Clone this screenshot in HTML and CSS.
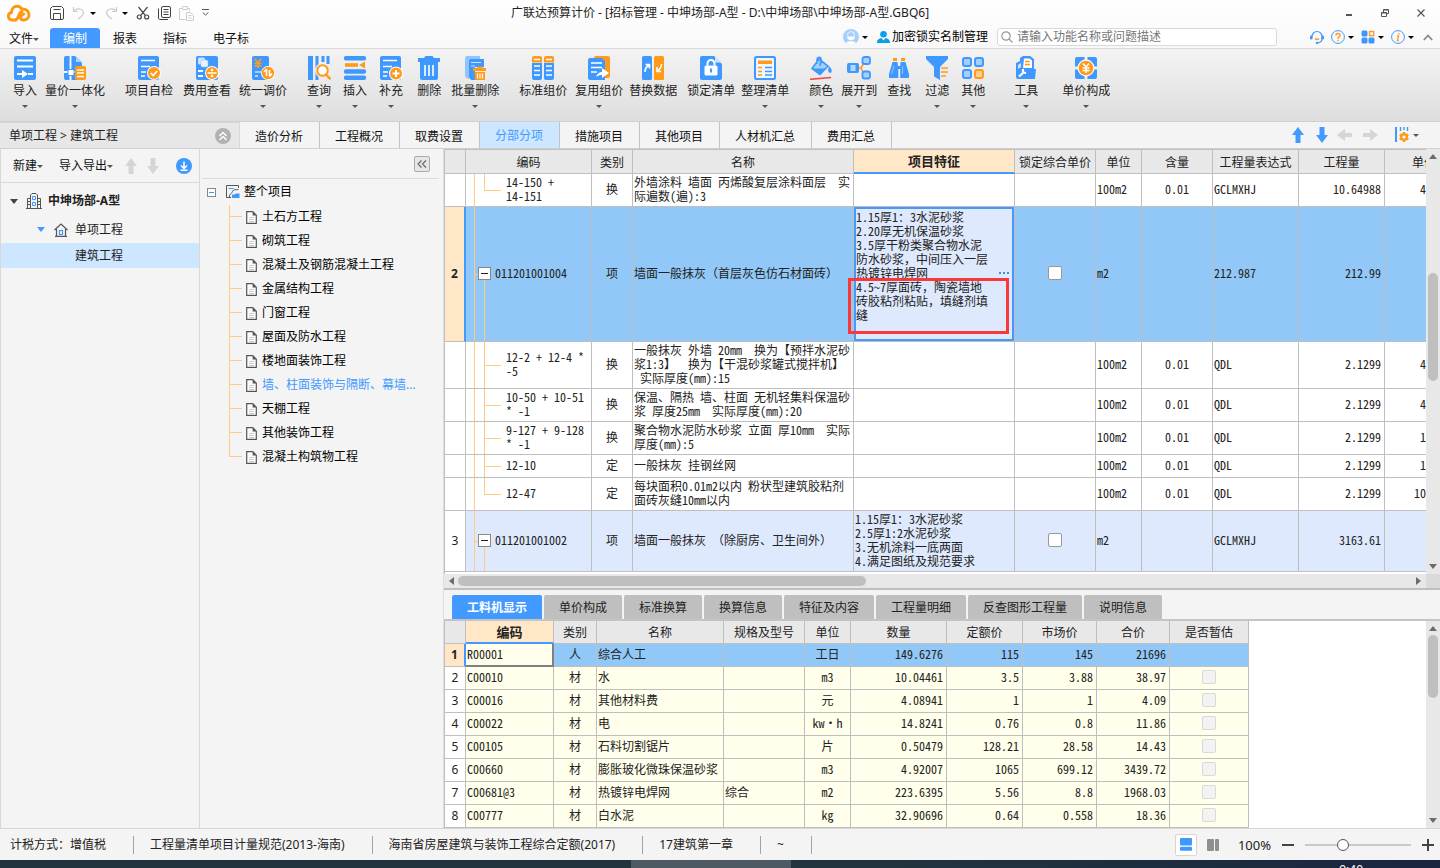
FILE: index.html
```html
<!DOCTYPE html>
<html lang="zh-CN">
<head>
<meta charset="utf-8">
<title>广联达预算计价</title>
<link rel="stylesheet" href="styles.css">
</head>
<body>
<svg class="defs" aria-hidden="true">
  <symbol id="i-doc" viewBox="0 0 11 13"><path d="M.7.7h6.1l3.500 3.500v8.100H.7z" fill="#fff" stroke="#555" stroke-width="1.200"/><path d="M6.600.5v3.900h4z" fill="#555"/><path d="M3 6.500h5M3 8.500h5M3 10.500h5" stroke="#ccc"/></symbol>
  <symbol id="i-up" viewBox="0 0 12 16"><path d="M6 0l6 8H8.500v8h-5V8H0z" fill="currentColor"/></symbol>
  <symbol id="i-down" viewBox="0 0 12 16"><path d="M6 16L0 8h3.500V0h5v8H12z" fill="currentColor"/></symbol>
  <symbol id="i-left" viewBox="0 0 16 12"><path d="M0 6l8-6v4h7v4H8v4z" fill="currentColor"/></symbol>
  <symbol id="i-right" viewBox="0 0 16 12"><path d="M16 6L8 0v4H1v4h7v4z" fill="currentColor"/></symbol>
</svg>

<header class="top">
  <div class="titlebar">
    <div class="quick">
      <svg class="logo" viewBox="0 0 24 18"><path d="M8.500 16H5a3.800 3.800 0 0 1-.6-7.500C4.600 5 7 2.300 10 2.300c2.200 0 3.800 1 4.800 2.700 3.800-.5 7.200 2 7.200 5.700 0 3-2.200 5.300-5.300 5.300-4.200 0-4.200-4 0-6" fill="none" stroke="#ff9914" stroke-width="3" stroke-linecap="round"/><path d="M8.300 16c2-.2 2.400-2 3.200-4 .8-2.200 1.600-3.800 3.500-4.200" fill="none" stroke="#ff9914" stroke-width="3" stroke-linecap="round"/></svg>
      <button class="qb save" aria-label="保存"><svg width="14" height="14" viewBox="0 0 14 14" fill="none" stroke="#444"><path d="M2.500.5h9l2 2v9.500a1.500 1.500 0 0 1-1.500 1.500H2A1.500 1.500 0 0 1 .5 12V2.500z"/><path d="M3.500 13V7.500h7V13M3.500 3.500h7"/></svg></button>
      <button class="qb" aria-label="撤销"><svg width="14" height="14" viewBox="0 0 14 14" fill="none" stroke="#ccc" stroke-width="1.200"><path d="M1.500 1v4.500H6M1.800 5.300C4 2.500 8 2 10.200 4.200S12 9 6 13"/></svg></button>
      <span class="caret black"></span>
      <button class="qb" aria-label="恢复"><svg width="14" height="14" viewBox="0 0 14 14" fill="none" stroke="#ccc" stroke-width="1.200"><path d="M12.500 1v4.500H8M12.200 5.300C10 2.500 6 2 3.800 4.200S2 9 8 13"/></svg></button>
      <span class="caret black"></span>
      <button class="qb" aria-label="剪切"><svg width="14" height="14" viewBox="0 0 14 14" fill="none" stroke="#444" stroke-width="1.200"><path d="M2.500 1l7 8.600M11.500 1l-7 8.600"/><circle cx="3.300" cy="11" r="2"/><circle cx="10.700" cy="11" r="2"/></svg></button>
      <button class="qb" aria-label="复制"><svg width="13" height="14" viewBox="0 0 13 14" fill="none" stroke="#444"><rect x="3.500" y=".5" width="9" height="11" rx="1.500"/><path d="M.5 2.500V12c0 1 .5 1.500 1.500 1.500h8M5.500 3.500h5M5.500 6h5M5.500 8.500h5"/></svg></button>
      <button class="qb" aria-label="粘贴"><svg width="15" height="15" viewBox="0 0 15 15" fill="none" stroke="#ccc"><path d="M3.500 2.500h-3v11h6M8.500 2.500h2V5M3.500.5h5v3h-5z"/><path d="M7.500 6.500h4l3 3v5h-7zM9.500 9.500h3M9.500 12h3"/></svg></button>
      <svg class="qb" width="7" height="8" viewBox="0 0 7 8" fill="none" stroke="#555"><path d="M0 .5h7M.7 3.500l2.800 2.500 2.800-2.500"/></svg>
    </div>
    <h1>广联达预算计价 - [招标管理 - 中坤场部-A型 - D:\中坤场部\中坤场部-A型.GBQ6]</h1>
    <div class="winbtns">
      <button aria-label="最小化"><svg width="10" height="10" viewBox="0 0 10 10"><path d="M2 7h6" stroke="#555" stroke-width="2"/></svg></button>
      <button aria-label="还原"><svg width="10" height="10" viewBox="0 0 10 10" fill="none" stroke="#555"><path d="M1.500 4.500h5v4h-5zM1 5h5.500M3.500 4V1.500h5v4H7M3.500 2h5"/></svg></button>
      <button aria-label="关闭"><svg width="10" height="10" viewBox="0 0 10 10" stroke="#555" stroke-width="1.200"><path d="M1.500 1.500l7 7M8.500 1.500l-7 7"/></svg></button>
    </div>
  </div>
  <div class="menubar">
    <nav class="menus">
      <button class="file">文件<span class="caret"></span></button>
      <button class="on">编制</button><button>报表</button><button>指标</button><button>电子标</button>
    </nav>
    <div class="tools">
      <svg width="16" height="16" viewBox="0 0 16 16"><circle cx="8" cy="8" r="8" fill="#a6d0fb"/><path d="M4.500 6.500c0-5 7-5 7 0" fill="none" stroke="#e6f2ff" stroke-width="1.200"/><path d="M4 7.500h8c0 5-8 5-8 0z" fill="#fff"/><path d="M3 14c1-2.500 9-2.500 10 0-2.500 2.500-7.500 2.500-10 0z" fill="#fff"/></svg>
      <span class="caret black"></span>
      <svg class="person" width="13" height="12" viewBox="0 0 13 12" fill="#0c9eea"><circle cx="6.500" cy="3.300" r="3.300"/><path d="M0 12c0-3.500 2-4.500 4.500-5l2 2.500L8.500 7c2.500.5 4.500 1.500 4.500 5z"/></svg>
      <a href="#">加密锁实名制管理</a>
      <label class="search"><svg width="12" height="12" viewBox="0 0 12 12" fill="none" stroke="#999" stroke-width="1.200"><circle cx="5" cy="5" r="4.200"/><path d="M8 8l3.500 3.500"/></svg><input type="text" placeholder="请输入功能名称或问题描述" aria-label="搜索"></label>
      <svg class="hs" width="14" height="14" viewBox="0 0 14 14" fill="none"><path d="M2 6.500a5 5 0 0 1 10 0V9c0 2.500-2 3.500-4.500 4" stroke="#3e98fe" stroke-width="1.200"/><rect x="0" y="5.500" width="2.600" height="4" rx="1.200" fill="#3e98fe"/><rect x="11.400" y="5.500" width="2.600" height="4" rx="1.200" fill="#3e98fe"/><path d="M5 8.500c1 1.300 3 1.300 4 0" stroke="#ff9a1a" stroke-width="1.400"/><circle cx="7" cy="13" r="1.200" fill="#3e98fe"/></svg>
      <svg width="14" height="14" viewBox="0 0 14 14" fill="none"><circle cx="7" cy="7" r="6.400" stroke="#3e98fe"/><path d="M5 5.500c0-2.600 4-2.600 4 0 0 1.500-2 1.300-2 3.200M7 9.800v1.400" stroke="#ff9a1a" stroke-width="1.400"/></svg>
      <span class="caret black"></span>
      <svg width="14" height="14" viewBox="0 0 14 14" fill="#3e98fe"><rect x=".5" y=".5" width="6" height="6" rx="1.500"/><rect x=".5" y="7.500" width="6" height="6" rx="1.500"/><rect x="7.500" y="7.500" width="6" height="6" rx="1.500"/><rect x="8.500" y="1.500" width="4.200" height="4.200" fill="none" stroke="#ff9a1a" stroke-width="1.300"/></svg>
      <span class="caret black"></span>
      <svg width="14" height="14" viewBox="0 0 14 14" fill="none"><circle cx="7" cy="7" r="6.400" stroke="#3e98fe"/><path d="M7.800 3v1.500M6 6h1.500l-1 4.700h1.300" stroke="#ff9a1a" stroke-width="1.300"/></svg>
      <span class="caret black"></span>
      <svg width="10" height="7" viewBox="0 0 10 7" fill="none" stroke="#888" stroke-width="1.800"><path d="M.8 6L5 1.500 9.200 6"/></svg>
    </div>
  </div>
</header>

<section class="ribbon">
  <button><svg viewBox="0 0 24 24"><rect x="1" width="22" height="24" rx="2" fill="#3e98fe"/><path d="M4 4.500h16M4 10.500h16" stroke="#fff" stroke-width="1.800"/><path d="M4 18h6M15 18h5" stroke="#fff" stroke-width="2"/><path d="M9 14l6 4-6 4z" fill="#fff"/></svg>导入<span class="caret"></span></button>
  <button class="g8"><svg viewBox="0 0 24 24"><path d="M3 0h9l7 7v17H3a2 2 0 0 1-2-2V2a2 2 0 0 1 2-2z" fill="#3e98fe"/><path d="M13 0l6 6h-6z" fill="#a6d0fb"/><path d="M7.500 0v24M1 16h14" stroke="#fff" stroke-width="1.800"/><rect x="5" y="13.500" width="6" height="6" fill="#fff" stroke="#3e98fe"/><rect x="12" y="10" width="11" height="14" rx="2" fill="#ff9a1a"/><path d="M14 14h7M14 17h7M14 20.500h7" stroke="#fff" stroke-width="1.500"/></svg>量价一体化<span class="caret"></span></button>
  <button class="g20"><svg viewBox="0 0 24 24"><rect x="1" width="21" height="24" rx="2" fill="#3e98fe"/><path d="M4 4.500h14M4 10.500h9M4 16h5M4 20h4" stroke="#fff" stroke-width="1.600"/><circle cx="17" cy="17" r="7" fill="#fff"/><circle cx="17" cy="17" r="6" fill="#ff9a1a"/><path d="M13.800 17l2.400 2.500 4-4.500" fill="none" stroke="#fff" stroke-width="1.800"/></svg>项目自检</button>
  <button class="g10"><svg viewBox="0 0 24 24"><rect x="1" width="22" height="24" rx="2" fill="#3e98fe"/><rect x="3" y="1.500" width="7" height="7" rx="1.500" fill="#cfe5ff"/><rect x="6" y="4" width="7" height="7" rx="1.500" fill="#eaf4ff" stroke="#8fc2fb" stroke-width=".6"/><path d="M3 15h5M3 20h5" stroke="#fff" stroke-width="1.800"/><circle cx="17" cy="17" r="7" fill="#fff"/><circle cx="17" cy="17" r="6" fill="#ff9a1a"/><path d="M12.500 17h9" stroke="#fff" stroke-width="1.600"/><circle cx="17" cy="14" r="1.300" fill="#fff"/><circle cx="17" cy="20" r="1.300" fill="#fff"/></svg>费用查看</button>
  <button class="g8"><svg viewBox="0 0 24 24"><rect x="1" width="17" height="24" rx="2" fill="#3e98fe"/><path d="M4 3l3 4 3-4M7 7v5M3.500 7.500h7M3.500 10h7" fill="none" stroke="#ff9a1a" stroke-width="1.700"/><path d="M4 16h6M4 20h3" stroke="#a6d0fb" stroke-width="1.800"/><circle cx="17" cy="17" r="7" fill="#fff"/><circle cx="17" cy="17" r="6.200" fill="#ff9a1a"/><path d="M15.500 13.500V20M13 16l2.500-3M18.500 14v6.500M21 17.500l-2.500 3" stroke="#fff" stroke-width="1.600"/></svg>统一调价<span class="caret"></span></button>
  <button class="g20"><svg viewBox="0 0 24 24"><path d="M3.500 0v24" stroke="#3e98fe" stroke-width="5"/><path d="M10 0v24M16 0v6M21 0v8" stroke="#3e98fe" stroke-width="3"/><circle cx="15.500" cy="14.500" r="7.500" fill="#f0f0f0"/><circle cx="15.500" cy="14.500" r="5.300" fill="#fff" stroke="#ff9a1a" stroke-width="2"/><path d="M19 18.500l4.500 4.800" stroke="#ff9a1a" stroke-width="2.400"/></svg>查询<span class="caret"></span></button>
  <button class="g12"><svg viewBox="0 0 24 24"><path d="M3 2.300h18M3 15.500h18M3 21.700h18" stroke="#3e98fe" stroke-width="4.400" stroke-linecap="round"/><path d="M2 9h13" stroke="#ff9a1a" stroke-width="3.600"/><path d="M22 5.500v7L16 9z" fill="#ff9a1a"/></svg>插入<span class="caret"></span></button>
  <button class="g12"><svg viewBox="0 0 24 24"><rect x="1" width="21" height="24" rx="2" fill="#3e98fe"/><path d="M4 4.500h14M4 10.500h9M4 16h5M4 20h4" stroke="#fff" stroke-width="1.600"/><circle cx="17" cy="17.500" r="7" fill="#fff"/><circle cx="17" cy="17.500" r="6" fill="#ff9a1a"/><path d="M13.500 17.500h7M17 14v7" stroke="#fff" stroke-width="2"/></svg>补充<span class="caret"></span></button>
  <button class="g15"><svg viewBox="0 0 24 24" fill="#3e98fe"><path d="M1 2h6l1.500-2h7L17 2h6v4H1zM3 6h18v16a2 2 0 0 1-2 2H5a2 2 0 0 1-2-2z"/><path d="M8 9v11M12 9v11M16 9v11" stroke="#fff" stroke-width="1.600"/></svg>删除</button>
  <button class="g10"><svg viewBox="0 0 24 24"><path d="M3 0h14v5H6v18a5 5 0 0 1-4-4V2z" fill="#8fc5fb"/><path d="M7 3h14v8H12v13H9a4 4 0 0 1-3-4V5z" fill="#3e98fe"/><path d="M8 6.500h10M8 10h4" stroke="#cfe5ff"/><path d="M10 12h4l1-1.500h4L20 12h3v3H10zM11.500 16H22v8H12z" fill="#ff9a1a"/><path d="M14.500 17.500v5M17 17.500v5M19.500 17.500v5" stroke="#fff" stroke-width="1.200"/></svg>批量删除<span class="caret"></span></button>
  <button class="g20"><svg viewBox="0 0 24 24"><path d="M1 7h10v15a2 2 0 0 1-2 2H3a2 2 0 0 1-2-2zM13 7h10v15a2 2 0 0 1-2 2h-6a2 2 0 0 1-2-2z" fill="#3e98fe"/><path d="M3 0h6a2 2 0 0 1 2 2v4.500H1V2a2 2 0 0 1 2-2zM15 0h6a2 2 0 0 1 2 2v4.500H13V2a2 2 0 0 1 2-2z" fill="#ff9a1a"/><path d="M3 3.500h6M15 3.500h6M3 10h6M3 14.500h6M3 19h6M15 10h6M15 14.500h6M15 19h6" stroke="#fff" stroke-width="1.500"/></svg>标准组价</button>
  <button class="g8"><svg viewBox="0 0 24 24"><rect x="7" width="16" height="22" rx="2" fill="#ff9a1a"/><path d="M3 2h12l3 3v19H3a2 2 0 0 1-2-2V4a2 2 0 0 1 2-2z" fill="#3e98fe"/><path d="M4 7h11M4 11.500h11M4 16h6" stroke="#fff" stroke-width="1.700"/><path d="M9 21c1-3 3-5 6-5v-4l7 5-7 5v-3c-2 0-4 .5-6 2z" fill="#fff"/></svg>复用组价<span class="caret"></span></button>
  <button class="g6"><svg viewBox="0 0 24 24"><rect x="1" width="10" height="24" rx="1.500" fill="#3e98fe"/><rect x="13" width="10" height="24" rx="1.500" fill="#ff9a1a"/><path d="M4 16c0-3 1-5 4-7M4.500 8.500h4v4M20.500 8c0 3-1 5-4 7M16 11v4.500h4" fill="none" stroke="#fff" stroke-width="1.600"/></svg>替换数据</button>
  <button class="g10"><svg viewBox="0 0 24 24"><path d="M3 0h12l8 8v14a2 2 0 0 1-2 2H3a2 2 0 0 1-2-2V2a2 2 0 0 1 2-2z" fill="#3e98fe"/><path d="M16 0l6.500 6.500H16z" fill="#c9e2ff"/><rect x="5.500" y="9.500" width="13" height="10" rx="1.500" fill="#fff"/><path d="M8.500 9.500V7.500a3.500 3.500 0 0 1 7 0v2" fill="none" stroke="#fff" stroke-width="2"/><path d="M12 12.500v4" stroke="#3e98fe" stroke-width="2"/></svg>锁定清单</button>
  <button class="g6"><svg viewBox="0 0 24 24"><rect x="2" y="1" width="20" height="22" rx="1.500" fill="#eef6ff" stroke="#3e98fe" stroke-width="2"/><rect x="5" y="4.500" width="14" height="3.500" fill="#ff9a1a"/><path d="M5 11.500h4M5 15.500h4M5 19h4" stroke="#ff9a1a" stroke-width="1.500"/><path d="M12 11.500h7M12 15.500h7M12 19h7" stroke="#3e98fe" stroke-width="1.500"/></svg>整理清单<span class="caret"></span></button>
  <button class="g20"><svg viewBox="0 0 24 24"><path d="M10 3l9 7-8 8.500-8-6zM8 8V3.500C8.500 0 13 1 12 4l-1 6" fill="#a6d0fb" stroke="#3e98fe" stroke-width="1.600"/><path d="M4 12.500h13l-6 6z" fill="#3e98fe"/><path d="M20 10c3 3.500 3.500 5.500 1.500 7-2.500 0-3-3-1.500-7z" fill="#3e98fe"/><path d="M1 23.300l21-1.800" stroke="#f04848" stroke-width="1.600"/></svg>颜色<span class="caret"></span></button>
  <button class="g8"><svg viewBox="0 0 24 24"><path d="M11 12h3l4-7M14 12l4 8" fill="none" stroke="#ff9a1a" stroke-width="1.600"/><rect x="0" y="7" width="12" height="10" rx="2" fill="#3e98fe"/><rect x="3.500" y="9" width="5" height="6" fill="#b5d8ff"/><rect x="15.500" y="1" width="7.500" height="7" rx="2" fill="#a6d0fb" stroke="#3e98fe" stroke-width="1.800"/><rect x="15.500" y="15.500" width="7.500" height="7" rx="2" fill="#a6d0fb" stroke="#3e98fe" stroke-width="1.800"/></svg>展开到<span class="caret"></span></button>
  <button class="g10"><svg viewBox="0 0 24 24"><path d="M5.500 6h5l.8 6V22H2V18zM13.500 6h5L22 18v4h-8.800V12z" fill="#3e98fe"/><path d="M9 10h6v3H9z" fill="#3e98fe"/><path d="M6 3.500h4M14 3.500h4" stroke="#ff9a1a" stroke-width="3"/><path d="M4.500 18l2.500-8M15.500 18l.2-8" stroke="#8fc5fb"/></svg>查找</button>
  <button class="g15"><svg viewBox="0 0 24 24"><path d="M1 0h22v3l-8 8v13l-6-3.500V11L1 3z" fill="#3e98fe"/><path d="M16 12h7M16 16h7M16 20h5" stroke="#ff9a1a" stroke-width="1.700"/></svg>过滤<span class="caret"></span></button>
  <button class="g12"><svg viewBox="0 0 24 24" stroke-width="2"><g fill="#a6d0fb" stroke="#3e98fe"><rect x="2" y="2" width="8" height="8" rx="2"/><rect x="14" y="2" width="8" height="8" rx="2"/><rect x="2" y="14" width="8" height="8" rx="2"/></g><rect x="14" y="14" width="8" height="8" rx="2" fill="#ffcf8f" stroke="#ff9a1a"/></svg>其他<span class="caret"></span></button>
  <button class="g28"><svg viewBox="0 0 24 24"><path d="M2 7l4-2V2l3-2h7l4 3v10h2l-1 10H4a2 2 0 0 1-2-2z" fill="#3e98fe"/><path d="M10 2.500h5.500l2.500 2v7.500H9z" fill="#fff"/><path d="M11 5.500h5M11 8.500h5" stroke="#ff9a1a" stroke-width="1.600"/><path d="M4 9l3-2v4L4 13z" fill="#cfe5ff"/><path d="M5 20.500l5-4.500M9 13v3.500l3 .5" stroke="#fff" stroke-width="2.200" fill="none"/></svg>工具<span class="caret"></span></button>
  <button class="g24"><svg viewBox="0 0 24 24"><path d="M3 1h7.500v3H13.500V1H21a2 2 0 0 1 2 2v7.500h-3v3h3V21a2 2 0 0 1-2 2h-7.500v-3h-3v3H3a2 2 0 0 1-2-2v-7.500h3v-3H1V3a2 2 0 0 1 2-2z" fill="#3e98fe"/><circle cx="12" cy="12" r="8.500" fill="#fff"/><circle cx="12" cy="12" r="7.300" fill="#ff9a1a"/><path d="M9 7.500l3 3.500 3-3.500M12 11v6M8.500 12h7M8.500 14.500h7" fill="none" stroke="#fff" stroke-width="1.500"/></svg>单价构成<span class="caret"></span></button>
</section>

<div class="navrow">
  <div class="crumb"><span>单项工程 &gt; 建筑工程</span><button aria-label="收起"><svg width="16" height="16" viewBox="0 0 16 16"><circle cx="8" cy="8" r="8" fill="#b2b2b2"/><path d="M4.500 8L8 4.500 11.500 8M4.500 12L8 8.500l3.500 3.500" fill="none" stroke="#fff" stroke-width="1.400"/></svg></button></div>
  <nav class="pages"><button>造价分析</button><button>工程概况</button><button>取费设置</button><button class="on">分部分项</button><button>措施项目</button><button>其他项目</button><button>人材机汇总</button><button>费用汇总</button></nav>
  <div class="moves">
    <button class="blue" aria-label="上移"><svg width="12" height="16"><use href="#i-up"/></svg></button>
    <button class="blue" aria-label="下移"><svg width="12" height="16"><use href="#i-down"/></svg></button>
    <button aria-label="左移"><svg width="16" height="12"><use href="#i-left"/></svg></button>
    <button aria-label="右移"><svg width="16" height="12"><use href="#i-right"/></svg></button>
    <button class="cfg" aria-label="列设置"><svg width="14" height="16" viewBox="0 0 14 16"><path d="M1 0v15" stroke="#3e98fe" stroke-width="2"/><path d="M5.500 0v4M9 0v3M12.500 0v4" stroke="#3e98fe" stroke-width="1.400"/><path d="M9 5v10M4.700 7.500l8.600 5M4.700 12.500l8.600-5" stroke="#ff9a1a" stroke-width="2.400"/><circle cx="9" cy="10" r="2.800" fill="#fff" stroke="#ff9a1a" stroke-width="2.400"/></svg><span class="caret"></span></button>
  </div>
</div>

<main class="main">
  <aside class="projects">
    <div class="ptools">
      <button>新建<span class="caret"></span></button>
      <button class="io">导入导出<span class="caret"></span></button>
      <button class="dim" aria-label="上移"><svg width="12" height="16"><use href="#i-up"/></svg></button>
      <button class="dim" aria-label="下移"><svg width="12" height="16"><use href="#i-down"/></svg></button>
      <button class="dl" aria-label="下载"><svg width="16" height="16" viewBox="0 0 16 16"><circle cx="8" cy="8" r="8" fill="#3e98fe"/><path d="M8 3.500V10M5 7.500L8 10.500l3-3M4.500 12.300h7" fill="none" stroke="#fff" stroke-width="1.500"/></svg></button>
    </div>
    <ul class="ptree">
      <li class="l1"><span class="tri"></span><svg width="16" height="16" viewBox="0 0 16 16" fill="none" stroke="#555"><path d="M0 15.500h16M1.500 15V5.500H4M4.500 15V2L6 .5h4L11.500 2v13M12 5.500h2.500V15M2 8.500h2M2 11.500h2M12 8.500h2M12 11.500h2"/><path d="M6.500 3.500h3v3h-3zM6.500 9.500h3v3h-3z" stroke="#3e98fe"/></svg><b>中坤场部-A型</b></li>
      <li class="l2"><span class="tri"></span><svg width="14" height="14" viewBox="0 0 14 14" fill="none" stroke="#555" stroke-width="1.200"><path d="M.5 7L7 1l6.500 6M2.500 6v7M11.500 6v7M1 13.400h12"/><path d="M5.500 7.500h3v4h-3z" stroke="#3e98fe"/></svg><span>单项工程</span></li>
      <li class="l3">建筑工程</li>
    </ul>
  </aside>

  <aside class="outline">
    <div class="ohead"><button aria-label="折叠"><svg width="10" height="8" viewBox="0 0 10 8" fill="none" stroke="#666" stroke-width="1.200"><path d="M4.500.5L1 4l3.500 3.500M9 .5L5.500 4 9 7.500"/></svg></button></div>
    <div class="oroot"><span class="box"></span><svg width="14" height="14" viewBox="0 0 14 14" fill="none" stroke="#555"><path d="M12.500 3V.5h-12v12H5M3.500 12C3.500 8 6 9 6.500 6.500S10 5 12.500 4.500"/><path d="M2.500 3.500h5" stroke="#3e98fe"/><path d="M6 13V9.500h2.500l1.500-1h3.500V13z" fill="#3e98fe" stroke="none"/></svg>整个项目</div>
    <ul class="otree">
      <li><i></i><svg><use href="#i-doc"/></svg>土石方工程</li>
      <li><i></i><svg><use href="#i-doc"/></svg>砌筑工程</li>
      <li><i></i><svg><use href="#i-doc"/></svg>混凝土及钢筋混凝土工程</li>
      <li><i></i><svg><use href="#i-doc"/></svg>金属结构工程</li>
      <li><i></i><svg><use href="#i-doc"/></svg>门窗工程</li>
      <li><i></i><svg><use href="#i-doc"/></svg>屋面及防水工程</li>
      <li><i></i><svg><use href="#i-doc"/></svg>楼地面装饰工程</li>
      <li class="on"><i></i><svg><use href="#i-doc"/></svg>墙、柱面装饰与隔断、幕墙...</li>
      <li><i></i><svg><use href="#i-doc"/></svg>天棚工程</li>
      <li><i></i><svg><use href="#i-doc"/></svg>其他装饰工程</li>
      <li><i></i><svg><use href="#i-doc"/></svg>混凝土构筑物工程</li>
    </ul>
  </aside>

  <section class="work">
    <div class="upper">
      <div class="clip">
        <table class="grid bill">
          <colgroup><col class="w21"><col class="w126"><col class="w41"><col class="w221"><col class="w161"><col class="w81"><col class="w46"><col class="w71"><col class="w86"><col class="w86"><col></colgroup>
          <thead><tr><th></th><th>编码</th><th>类别</th><th>名称</th><th class="act">项目特征</th><th>锁定综合单价</th><th>单位</th><th>含量</th><th>工程量表达式</th><th>工程量</th><th class="cut-h">单价</th></tr></thead>
          <tbody>
            <tr class="h33"><td></td><td class="code last">14-150 +<br>14-151</td><td class="c">换</td><td>外墙涂料 墙面 丙烯酸复层涂料面层&nbsp; 实<br>际遍数(遍):3</td><td></td><td></td><td>100m2</td><td class="c">0.01</td><td>GCLMXHJ</td><td class="r">10.64988</td><td class="e">4</td></tr>
            <tr class="h135 sel"><td class="n">2</td><td class="parent"><div><span class="pm"></span>011201001004</div></td><td class="c">项</td><td>墙面一般抹灰（首层灰色仿石材面砖）</td>
              <td class="focus"><div class="feat">1.15厚1：3水泥砂浆<br>2.20厚无机保温砂浆<br>3.5厚干粉类聚合物水泥<br>防水砂浆，中间压入一层<br>热镀锌电焊网<br>4.5~7厚面砖，陶瓷墙地<br>砖胶粘剂粘贴，填缝剂填<br>缝<button class="dots" aria-label="编辑特征"></button><span class="mark"></span></div></td>
              <td class="c"><input type="checkbox" aria-label="锁定综合单价"></td><td>m2</td><td></td><td>212.987</td><td class="r">212.99</td><td></td></tr>
            <tr class="h47"><td></td><td class="code">12-2 + 12-4 *<br>-5</td><td class="c">换</td><td>一般抹灰 外墙 20mm&nbsp; 换为【预拌水泥砂<br>浆1:3】&nbsp; 换为【干混砂浆罐式搅拌机】<br>&nbsp;实际厚度(mm):15</td><td></td><td></td><td>100m2</td><td class="c">0.01</td><td>QDL</td><td class="r">2.1299</td><td class="e">4</td></tr>
            <tr class="h33"><td></td><td class="code">10-50 + 10-51<br>* -1</td><td class="c">换</td><td>保温、隔热 墙、柱面 无机轻集料保温砂<br>浆 厚度25mm&nbsp; 实际厚度(mm):20</td><td></td><td></td><td>100m2</td><td class="c">0.01</td><td>QDL</td><td class="r">2.1299</td><td class="e">4</td></tr>
            <tr class="h33"><td></td><td class="code">9-127 + 9-128<br>* -1</td><td class="c">换</td><td>聚合物水泥防水砂浆 立面 厚10mm&nbsp; 实际<br>厚度(mm):5</td><td></td><td></td><td>100m2</td><td class="c">0.01</td><td>QDL</td><td class="r">2.1299</td><td class="e">1</td></tr>
            <tr class="h23"><td></td><td class="code">12-10</td><td class="c">定</td><td>一般抹灰 挂钢丝网</td><td></td><td></td><td>100m2</td><td class="c">0.01</td><td>QDL</td><td class="r">2.1299</td><td class="e">1</td></tr>
            <tr class="h33"><td></td><td class="code last">12-47</td><td class="c">定</td><td>每块面积0.01m2以内 粉状型建筑胶粘剂<br>面砖灰缝10mm以内</td><td></td><td></td><td>100m2</td><td class="c">0.01</td><td>QDL</td><td class="r">2.1299</td><td class="e">10</td></tr>
            <tr class="h61 alt"><td class="n">3</td><td class="parent"><div><span class="pm"></span>011201001002</div></td><td class="c">项</td><td>墙面一般抹灰 （除厨房、卫生间外）</td><td>1.15厚1：3水泥砂浆<br>2.5厚1:2水泥砂浆<br>3.无机涂料一底两面<br>4.满足图纸及规范要求</td><td class="c"><input type="checkbox" aria-label="锁定综合单价"></td><td>m2</td><td></td><td>GCLMXHJ</td><td class="r">3163.61</td><td></td></tr>
          </tbody>
        </table>
      </div>
      <div class="vscroll v1"><span class="ar up"></span><span class="thumb"></span><span class="ar dn"></span></div>
      <div class="hscroll"><span class="ar lf"></span><span class="thumb"></span><span class="ar rt"></span></div>
      <div class="corner"></div>
    </div>
    <div class="lower">
      <nav class="dtabs"><button class="on">工料机显示</button><button>单价构成</button><button>标准换算</button><button>换算信息</button><button>特征及内容</button><button>工程量明细</button><button>反查图形工程量</button><button>说明信息</button></nav>
      <div class="lwrap">
        <div class="clip">
          <table class="grid res">
            <colgroup><col class="w21"><col class="w88"><col class="w43"><col class="w127"><col class="w81"><col class="w46"><col class="w96"><col class="w76"><col class="w74"><col class="w73"><col class="w79"></colgroup>
            <thead><tr><th></th><th class="act">编码</th><th>类别</th><th>名称</th><th>规格及型号</th><th>单位</th><th>数量</th><th>定额价</th><th>市场价</th><th>合价</th><th>是否暂估</th></tr></thead>
            <tbody>
              <tr class="sel"><td class="n">1</td><td class="focus">R00001</td><td class="c">人</td><td>综合人工</td><td></td><td class="c">工日</td><td class="r">149.6276</td><td class="r">115</td><td class="r">145</td><td class="r">21696</td><td></td></tr>
              <tr><td class="n">2</td><td>C00010</td><td class="c">材</td><td>水</td><td></td><td class="c">m3</td><td class="r">10.04461</td><td class="r">3.5</td><td class="r">3.88</td><td class="r">38.97</td><td class="c"><input type="checkbox" disabled aria-label="是否暂估"></td></tr>
              <tr><td class="n">3</td><td>C00016</td><td class="c">材</td><td>其他材料费</td><td></td><td class="c">元</td><td class="r">4.08941</td><td class="r">1</td><td class="r">1</td><td class="r">4.09</td><td class="c"><input type="checkbox" disabled aria-label="是否暂估"></td></tr>
              <tr><td class="n">4</td><td>C00022</td><td class="c">材</td><td>电</td><td></td><td class="c">kw·h</td><td class="r">14.8241</td><td class="r">0.76</td><td class="r">0.8</td><td class="r">11.86</td><td class="c"><input type="checkbox" disabled aria-label="是否暂估"></td></tr>
              <tr><td class="n">5</td><td>C00105</td><td class="c">材</td><td>石料切割锯片</td><td></td><td class="c">片</td><td class="r">0.50479</td><td class="r">128.21</td><td class="r">28.58</td><td class="r">14.43</td><td class="c"><input type="checkbox" disabled aria-label="是否暂估"></td></tr>
              <tr><td class="n">6</td><td>C00660</td><td class="c">材</td><td>膨胀玻化微珠保温砂浆</td><td></td><td class="c">m3</td><td class="r">4.92007</td><td class="r">1065</td><td class="r">699.12</td><td class="r">3439.72</td><td class="c"><input type="checkbox" disabled aria-label="是否暂估"></td></tr>
              <tr><td class="n">7</td><td>C00681@3</td><td class="c">材</td><td>热镀锌电焊网</td><td>综合</td><td class="c">m2</td><td class="r">223.6395</td><td class="r">5.56</td><td class="r">8.8</td><td class="r">1968.03</td><td class="c"><input type="checkbox" disabled aria-label="是否暂估"></td></tr>
              <tr><td class="n">8</td><td>C00777</td><td class="c">材</td><td>白水泥</td><td></td><td class="c">kg</td><td class="r">32.90696</td><td class="r">0.64</td><td class="r">0.558</td><td class="r">18.36</td><td class="c"><input type="checkbox" disabled aria-label="是否暂估"></td></tr>
            </tbody>
          </table>
        </div>
        <div class="vscroll v2"><span class="ar up"></span><span class="thumb"></span><span class="ar dn"></span></div>
      </div>
    </div>
  </section>
</main>

<footer class="status">
  <span>计税方式：增值税</span><span>工程量清单项目计量规范(2013-海南)</span><span>海南省房屋建筑与装饰工程综合定额(2017)</span><span>17建筑第一章</span><span>~</span>
  <div class="zoom">
    <button class="view on" aria-label="上下布局"><svg width="12" height="13" viewBox="0 0 12 13" fill="#3e98fe"><rect y="0" width="12" height="7.500" rx="1"/><rect y="8.700" width="12" height="4" rx="1"/></svg></button>
    <button class="view" aria-label="左右布局"><svg width="12" height="12" viewBox="0 0 12 12" fill="#8f8f8f"><rect width="7" height="12" rx="1"/><rect x="8" width="4" height="12" rx="1"/></svg></button>
    <span class="pct">100%</span>
    <button aria-label="缩小"><svg width="12" height="12"><path d="M0 6h12" stroke="#444" stroke-width="2"/></svg></button>
    <input type="range" min="0" max="100" value="34" aria-label="缩放">
    <button aria-label="放大"><svg width="12" height="12"><path d="M0 6h12M6 0v12" stroke="#444" stroke-width="2"/></svg></button>
  </div>
</footer>
<div class="taskbar"><span class="app"></span><span class="clock">9:40</span></div>
</body>
</html>
```
FILE: styles.css
```css
* { box-sizing: border-box; }
html, body { height: 100%; }
body {
  margin: 0;
  display: flex;
  flex-direction: column;
  overflow: hidden;
  background: #f4f4f4;
  color: #222;
  font: 12px/16px "Noto Sans", "Noto Sans CJK SC", sans-serif;
}
button {
  margin: 0;
  padding: 0;
  border: 0;
  background: none;
  color: inherit;
  font: inherit;
  white-space: nowrap;
}
ul { margin: 0; padding: 0; list-style: none; }
svg { display: block; flex: none; }
.defs { position: absolute; width: 0; height: 0; }
.caret {
  display: inline-block;
  flex: none;
  border: 3px solid transparent;
  border-top-color: #555;
  border-bottom: 0;
}
.caret.black { border-top-color: #000; }

/* title and menu */
.top {
  flex: none;
  background: linear-gradient(#fff, #f8f8f8);
  border-bottom: 1px solid #d8d8d8;
}
.titlebar {
  display: grid;
  grid-template-columns: 1fr auto 1fr;
  align-items: center;
  height: 26px;
}
.titlebar h1 { margin: 0; font-size: 12px; font-weight: 400; line-height: 26px; }
.quick { display: flex; align-items: center; padding-left: 7px; }
.logo { width: 24px; height: 18px; }
.qb { margin-left: 8px; }
.qb.save { margin-left: 19px; }
.quick .caret { margin-left: 4px; }
.winbtns { display: flex; justify-content: flex-end; gap: 26px; padding-right: 14px; }
.menubar { display: flex; align-items: flex-end; justify-content: space-between; height: 22px; }
.menus { display: flex; }
.menus button { height: 20px; padding: 1px 13px 0; border-radius: 3px 3px 0 0; color: #111; }
.menus .file { padding: 1px 11px 0 9px; }
.file .caret, .ptools .caret { vertical-align: middle; }
.menus .on { background: #4299ff; color: #fff; }
.tools { display: flex; align-items: center; height: 22px; padding-right: 7px; }
.tools .caret { margin: 0 7px 0 3px; }
.tools .caret:last-of-type { margin-right: 9px; }
.tools .person { margin-left: 2px; }
.tools a { margin: 0 9px 0 2px; color: #000; text-decoration: none; }
.hs { margin-right: 7px; }
.search {
  display: flex;
  align-items: center;
  gap: 4px;
  width: 280px;
  height: 18px;
  margin-right: 33px;
  padding: 0 3px;
  background: #fff;
  border: 1px solid #d9d9d9;
  border-radius: 3px;
}
.search input { flex: 1; min-width: 0; padding: 0; border: 0; outline: 0; background: none; font: inherit; }
.search input::placeholder { color: #777; opacity: 1; }

/* ribbon */
.ribbon {
  display: flex;
  flex: none;
  height: 73px;
  padding: 7px 13px 0;
  background: linear-gradient(#f3f3f3, #dedede);
  border-bottom: 1px solid #cfcfcf;
}
.ribbon button { display: flex; flex: none; flex-direction: column; align-items: center; }
.ribbon svg { width: 24px; height: 24px; margin-bottom: 3px; }
.ribbon .caret { margin-top: 6px; }
.ribbon .g6 { margin-left: 6px; }
.ribbon .g8 { margin-left: 8px; }
.ribbon .g10 { margin-left: 10px; }
.ribbon .g12 { margin-left: 12px; }
.ribbon .g15 { margin-left: 14px; }
.ribbon .g20 { margin-left: 20px; }
.ribbon .g24 { margin-left: 24px; }
.ribbon .g28 { margin-left: 29px; }

/* page navigation */
.navrow { display: flex; flex: none; height: 27px; border-bottom: 1px solid #d0d0d0; }
.crumb {
  display: flex;
  align-items: center;
  justify-content: space-between;
  width: 240px;
  padding: 0 8px 0 9px;
  background: #e7e7e7;
  border: solid #d8d8d8;
  border-width: 1px 1px 0 0;
}
.pages { display: flex; }
.pages button { padding: 4px 16px 0 15px; border-right: 1px solid #c3c3c3; color: #111; }
.pages .on { padding-top: 2px; background: #cce7ff; color: #4299ff; }
.moves { display: flex; align-items: center; gap: 9px; margin-left: auto; padding-right: 21px; color: #d5d5d5; }
.moves .blue { color: #4299ff; }
.moves .blue:first-child { margin-right: 3px; }
.moves .cfg { display: flex; align-items: center; gap: 4px; margin-left: 8px; }

.main { display: flex; flex: 1; min-height: 0; }

/* project list */
.projects { flex: none; width: 200px; border: solid #d8d8d8; border-width: 0 1px; }
.ptools { display: flex; align-items: center; height: 34px; padding: 0 7px 0 12px; border-bottom: 1px solid #d8d8d8; color: #111; }
.ptools .io { margin: 0 12px 0 16px; }
.ptools .dim { margin-right: 10px; color: #d5d5d5; }
.ptools .dl { margin-left: auto; }
.ptree { padding-top: 3px; }
.ptree li { display: flex; align-items: center; }
.tri { border: 4px solid transparent; border-top: 5px solid #444; border-bottom: 0; }
.l1 { height: 30px; padding-left: 9px; }
.l1 svg { margin: 0 6px 0 8px; }
.l2 { height: 27px; padding-left: 36px; }
.l2 .tri { border-top-color: #4299ff; }
.l2 svg { margin: 0 7px 0 9px; }
.l3 { height: 25px; padding-left: 74px; background: #cce7ff; }

/* section outline */
.outline { flex: none; width: 244px; padding: 0 4px 0 2px; border-right: 1px solid #dedede; color: #000; }
.ohead { display: flex; align-items: center; justify-content: flex-end; height: 30px; padding-right: 9px; border-bottom: 1px solid #dcdcdc; }
.ohead button { display: grid; place-items: center; width: 16px; height: 16px; border: 1px solid #aaa; border-radius: 2px; background: #e6e6e6; }
.oroot { display: flex; align-items: center; height: 26px; padding-left: 5px; }
.box { width: 9px; height: 9px; margin-right: 10px; border: 1px solid #888; background: linear-gradient(#3e98fe, #3e98fe) center / 5px 1px no-repeat #fff; }
.oroot svg { margin-right: 4px; }
.otree { padding-left: 27px; }
.otree li { display: flex; align-items: center; height: 24px; white-space: nowrap; }
.otree i {
  width: 13px;
  height: 24px;
  margin-right: 4px;
  background:
    linear-gradient(#ffcb82, #ffcb82) 0 0 / 1px 100% no-repeat,
    linear-gradient(#ffcb82, #ffcb82) 0 11px / 13px 1px no-repeat;
}
.otree li:last-child i { background-size: 1px 12px, 13px 1px; }
.otree svg { width: 11px; height: 13px; margin-right: 5px; }
.otree .on { color: #4299ff; }

/* data grids */
.work { display: flex; flex: 1; flex-direction: column; min-width: 0; }
.clip { overflow: hidden; min-width: 0; border-left: 1px solid #bfbfbf; background: #fff; }
.grid {
  table-layout: fixed;
  border-spacing: 0;
  color: #222;
  font: 12px/14px "Noto Sans Mono CJK SC", "Noto Sans CJK SC", monospace;
}
.bill { width: 100%; border-top: 1px solid #bfbfbf; }
.res { width: 804px; }
.w21 { width: 21px; }
.w41 { width: 41px; }
.w43 { width: 43px; }
.w46 { width: 46px; }
.w71 { width: 71px; }
.w73 { width: 73px; }
.w74 { width: 74px; }
.w76 { width: 76px; }
.w79 { width: 79px; }
.w81 { width: 81px; }
.w86 { width: 86px; }
.w88 { width: 88px; }
.w96 { width: 96px; }
.w126 { width: 126px; }
.w127 { width: 127px; }
.w161 { width: 161px; }
.w221 { width: 221px; }
.grid th, .grid td { padding: 0 2px 2px; border: solid #bfbfbf; border-width: 0 1px 1px 0; white-space: nowrap; }
.grid th { height: 24px; padding: 0; overflow: hidden; background: #e8e8e8; font-weight: 400; }
.grid td { padding-left: 1px; }
.res th { height: 23px; }
.res td { height: 23px; background: #ffffeb; }
.grid th.act { background: #ffe7c8; border-bottom: 2px solid #4299ff; font-weight: 700; font-size: 13px; }
.grid th.cut-h { padding-left: 27px; text-align: left; border-right: 0; }
.grid td.c { padding-right: 1px; text-align: center; }
.grid td.r { padding-right: 3px; text-align: right; }
.grid td.e { padding-left: 0; padding-right: 0; text-align: right; }
.bill td:last-child { border-right: 0; }
.grid td:first-child { padding: 0; background: #fff; text-align: center; font-family: "Noto Sans", sans-serif; }
.h23 td { height: 23px; }
.h33 td { height: 33px; }
.h47 td { height: 47px; }
.h61 td { height: 61px; }
.h135 td { height: 135px; }
.grid .sel td { background-color: #92c8f7; }
.grid .alt td { background-color: #dee9fd; }
.grid .alt td:first-child { background-color: #fff; }
.grid .sel td:first-child { background: #ffe7c8; border-right: 2px solid #4299ff; font-weight: 700; }
.bill td.code {
  padding-left: 40px;
  background:
    linear-gradient(#ffcb82, #ffcb82) 8px 0 / 1px 100% no-repeat,
    linear-gradient(#ffcb82, #ffcb82) 18px 0 / 1px 100% no-repeat,
    linear-gradient(#ffcb82, #ffcb82) 18px 50% / 17px 1px no-repeat;
}
.bill td.code.last { background-size: 1px 100%, 1px 50%, 17px 1px; }
.bill td.parent {
  padding-left: 12px;
  background-image:
    linear-gradient(#ffcb82, #ffcb82),
    linear-gradient(#ffcb82, #ffcb82),
    linear-gradient(#ffcb82, #ffcb82);
  background-position: 8px 0, 18px 100%, 8px 50%;
  background-size: 1px 100%, 1px 50%, 5px 1px;
  background-repeat: no-repeat;
}
.parent div { display: flex; align-items: center; gap: 4px; }
.pm { width: 13px; height: 13px; border: 1px solid #888; background: linear-gradient(#222, #222) center / 7px 1px no-repeat #fff; }
.bill .sel td.focus { padding: 0; background: #dee9fd; box-shadow: inset 0 0 0 2px #4299ff; vertical-align: top; }
.feat { position: relative; padding: 3px 2px; }
.dots {
  position: absolute;
  right: 4px;
  top: 65px;
  width: 11px;
  height: 2px;
  background: repeating-linear-gradient(90deg, #4b8fc4 0 2px, transparent 2px 4px);
}
.mark { position: absolute; left: -6px; top: 71px; width: 161px; height: 56px; border: 3px solid #fb3838; }
.res .sel td.focus { background: #ffffeb; border-right: 2px solid #808080; border-bottom: 2px solid #808080; }
.grid input {
  display: block;
  appearance: none;
  width: 14px;
  height: 14px;
  margin: 0 auto;
  border: 1px solid #999;
  border-radius: 2px;
  background: #fff;
}
.grid input:disabled { border-color: #d9d9d9; background: #f3f3f3; }

.upper { display: grid; grid-template-columns: minmax(0, 1fr) 14px; flex: none; border-bottom: 2px solid #bfbfbf; }
.upper .clip { padding-bottom: 2px; }
.vscroll { display: flex; flex-direction: column; align-items: center; padding: 5px 0; background: #e8e8e8; }
.hscroll { display: flex; align-items: center; height: 14px; padding: 0 5px; background: #e8e8e8; }
.corner { background: #dadada; }
.thumb { border-radius: 5px; background: #bfbfbf; }
.ar { border: 4px solid transparent; }
.up { border-top: 0; border-bottom: 5px solid #6b6b6b; }
.dn { margin-top: auto; border-bottom: 0; border-top: 5px solid #6b6b6b; }
.lf { border-left: 0; border-right: 5px solid #6b6b6b; }
.rt { border-right: 0; border-left: 5px solid #6b6b6b; margin-left: auto; }
.hscroll .thumb { width: 42%; height: 10px; margin-left: 4px; }
.vscroll .thumb { width: 10px; }
.v1 .thumb { height: 26%; margin-top: 114px; }
.v2 .thumb { height: 63px; margin-top: 4px; }

.lower { display: flex; flex: 1; flex-direction: column; min-height: 0; padding-top: 5px; }
.dtabs { display: flex; flex: none; gap: 2px; padding-left: 8px; border-bottom: 2px solid #c4c4c4; }
.dtabs button { height: 24px; padding: 1px 15px 0; border-radius: 2px 2px 0 0; background: #bfbfbf; }
.dtabs .on { background: #4299ff; color: #fff; font-weight: 700; }
.lwrap { display: flex; flex: 1; min-height: 0; }
.lwrap .clip { flex: 1; }
.lwrap .vscroll { width: 14px; }

/* status */
.status { display: flex; align-items: center; flex: none; height: 32px; padding: 0 6px 0 10px; border-top: 1px solid #d6d6d6; }
.status > span { height: 18px; border-right: 1px solid #9aa3b5; padding: 1px 27px 0 16px; white-space: nowrap; }
.status > span:first-child { padding-left: 0; }
.zoom { display: flex; align-items: center; margin-left: auto; }
.view { display: grid; place-items: center; width: 22px; height: 22px; border: 1px solid transparent; border-radius: 2px; }
.view.on { margin-right: 5px; border-color: #d6d6d6; background: #fff; }
.pct { margin: 0 11px 0 14px; font-size: 13px; }
.zoom input { appearance: none; width: 106px; height: 12px; margin: 0 11px; background: linear-gradient(#c9c9c9, #c9c9c9) center / 100% 2px no-repeat; }
.zoom input::-webkit-slider-thumb { appearance: none; width: 12px; height: 12px; border: 1px solid #555; border-radius: 50%; background: #fff; }

.taskbar { display: flex; flex: none; height: 8px; overflow: hidden; background: linear-gradient(90deg, #22353e, #22353e 60%, #1a2540); }
.app { width: 160px; margin-left: 631px; background: #4d5a63; }
.clock { margin: 3px 77px 0 auto; color: #fff; line-height: 14px; }
```
